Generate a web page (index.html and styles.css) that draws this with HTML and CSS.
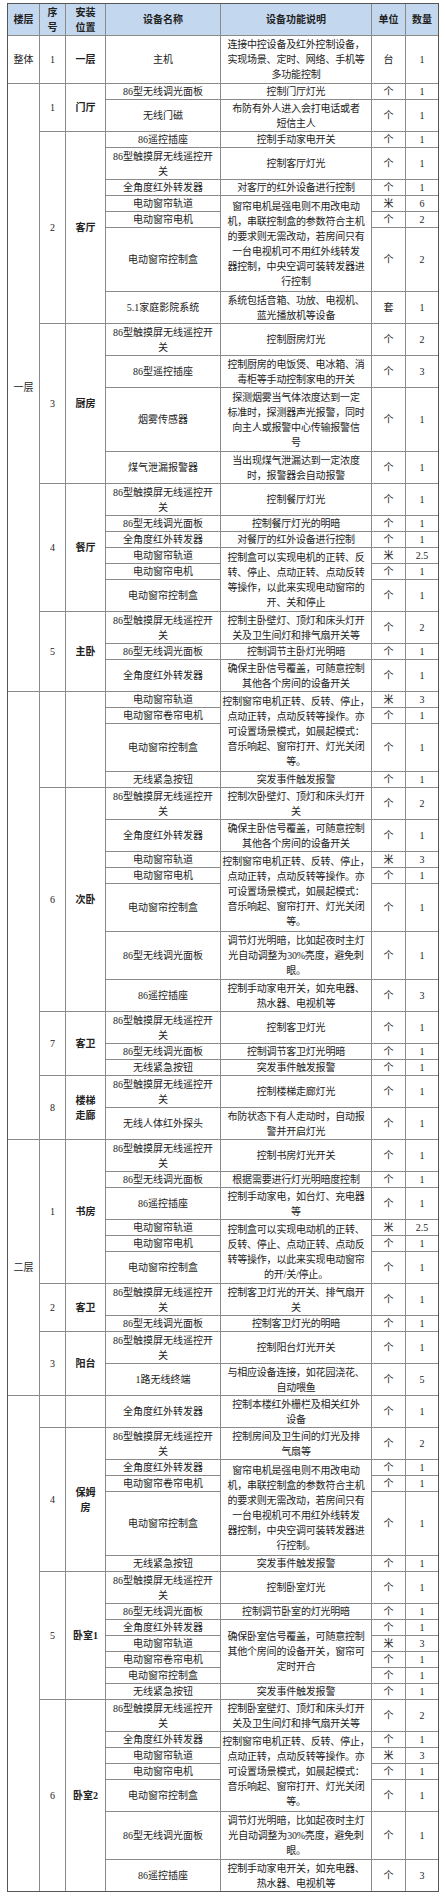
FILE: index.html
```html
<!DOCTYPE html>
<html lang="zh-CN">
<head>
<meta charset="utf-8">
<title>智能家居设备清单</title>
<link rel="stylesheet" href="styles.css">
</head>
<body>
<div class="sheet">
<table class="spec">
<colgroup>
<col class="c-floor"><col class="c-no"><col class="c-pos"><col class="c-name"><col class="c-desc"><col class="c-unit"><col class="c-qty">
</colgroup>
<thead>
<tr class="h2"><th>楼层</th><th>序<br>号</th><th>安装<br>位置</th><th>设备名称</th><th>设备功能说明</th><th>单位</th><th>数量</th></tr>
</thead>
<tbody>
<tr class="h3"><td>整体</td><td>1</td><td class="room">一层</td><td>主机</td><td class="desc">连接中控设备及红外控制设备，<br>实现场景、定时、网络、手机等<br>多功能控制</td><td>台</td><td>1</td></tr>

<tr class="h1"><td rowspan="22">一层</td><td rowspan="2">1</td><td rowspan="2" class="room">门厅</td><td>86型无线调光面板</td><td class="desc">控制门厅灯光</td><td>个</td><td>1</td></tr>
<tr class="h2"><td>无线门磁</td><td class="desc">布防有外人进入会打电话或者<br>短信主人</td><td>个</td><td>1</td></tr>

<tr class="h1"><td rowspan="7">2</td><td rowspan="7" class="room">客厅</td><td>86遥控插座</td><td class="desc">控制手动家电开关</td><td>个</td><td>1</td></tr>
<tr class="h2"><td>86型触摸屏无线遥控开<br>关</td><td class="desc">控制客厅灯光</td><td>个</td><td>1</td></tr>
<tr class="h1"><td>全角度红外转发器</td><td class="desc">对客厅的红外设备进行控制</td><td>个</td><td>1</td></tr>
<tr class="h1"><td>电动窗帘轨道</td><td rowspan="3" class="desc">窗帘电机是强电则不用改电动<br>机，串联控制盒的参数符合主机<br>的要求则无需改动，若房间只有<br>一台电视机可不用红外线转发<br>器控制，中央空调可装转发器进<br>行控制</td><td>米</td><td>6</td></tr>
<tr class="h1"><td>电动窗帘电机</td><td>个</td><td>2</td></tr>
<tr class="h4"><td>电动窗帘控制盒</td><td>个</td><td>2</td></tr>
<tr class="h2"><td>5.1家庭影院系统</td><td class="desc">系统包括音箱、功放、电视机、<br>蓝光播放机等设备</td><td>套</td><td>1</td></tr>

<tr class="h2"><td rowspan="4">3</td><td rowspan="4" class="room">厨房</td><td>86型触摸屏无线遥控开<br>关</td><td class="desc">控制厨房灯光</td><td>个</td><td>2</td></tr>
<tr class="h2"><td>86型遥控插座</td><td class="desc">控制厨房的电饭煲、电冰箱、消<br>毒柜等手动控制家电的开关</td><td>个</td><td>3</td></tr>
<tr class="h4"><td>烟雾传感器</td><td class="desc">探测烟雾当气体浓度达到一定<br>标准时，探测器声光报警，同时<br>向主人或报警中心传输报警信<br>号</td><td>个</td><td>1</td></tr>
<tr class="h2"><td>煤气泄漏报警器</td><td class="desc">当出现煤气泄漏达到一定浓度<br>时，报警器会自动报警</td><td>个</td><td>1</td></tr>

<tr class="h2"><td rowspan="6">4</td><td rowspan="6" class="room">餐厅</td><td>86型触摸屏无线遥控开<br>关</td><td class="desc">控制餐厅灯光</td><td>个</td><td>1</td></tr>
<tr class="h1"><td>86型无线调光面板</td><td class="desc">控制餐厅灯光的明暗</td><td>个</td><td>1</td></tr>
<tr class="h1"><td>全角度红外转发器</td><td class="desc">对餐厅的红外设备进行控制</td><td>个</td><td>1</td></tr>
<tr class="h1"><td>电动窗帘轨道</td><td rowspan="3" class="desc">控制盒可以实现电机的正转、反<br>转、停止、点动正转、点动反转<br>等操作，以此来实现电动窗帘的<br>开、关和停止</td><td>米</td><td>2.5</td></tr>
<tr class="h1"><td>电动窗帘电机</td><td>个</td><td>1</td></tr>
<tr class="h2"><td>电动窗帘控制盒</td><td>个</td><td>1</td></tr>

<tr class="h2"><td rowspan="3">5</td><td rowspan="3" class="room">主卧</td><td>86型触摸屏无线遥控开<br>关</td><td class="desc">控制主卧壁灯、顶灯和床头灯开<br>关及卫生间灯和排气扇开关等</td><td>个</td><td>2</td></tr>
<tr class="h1"><td>86型无线调光面板</td><td class="desc">控制调节主卧灯光明暗</td><td>个</td><td>1</td></tr>
<tr class="h2"><td>全角度红外转发器</td><td class="desc">确保主卧信号覆盖，可随意控制<br>其他各个房间的设备开关</td><td>个</td><td>1</td></tr>

<tr class="h1"><td rowspan="16"></td><td rowspan="4"></td><td rowspan="4" class="room"></td><td>电动窗帘轨道</td><td rowspan="3" class="desc">控制窗帘电机正转、反转、停止，<br>点动正转，点动反转等操作。亦<br>可设置场景模式，如晨起模式：<br>音乐响起、窗帘打开、灯光关闭<br>等。</td><td>米</td><td>3</td></tr>
<tr class="h1"><td>电动窗帘卷帘电机</td><td>个</td><td>1</td></tr>
<tr class="h3"><td>电动窗帘控制盒</td><td>个</td><td>1</td></tr>
<tr class="h1"><td>无线紧急按钮</td><td class="desc">突发事件触发报警</td><td>个</td><td>1</td></tr>

<tr class="h2"><td rowspan="7">6</td><td rowspan="7" class="room">次卧</td><td>86型触摸屏无线遥控开<br>关</td><td class="desc">控制次卧壁灯、顶灯和床头灯开<br>关</td><td>个</td><td>2</td></tr>
<tr class="h2"><td>全角度红外转发器</td><td class="desc">确保主卧信号覆盖，可随意控制<br>其他各个房间的设备开关</td><td>个</td><td>1</td></tr>
<tr class="h1"><td>电动窗帘轨道</td><td rowspan="3" class="desc">控制窗帘电机正转、反转、停止，<br>点动正转，点动反转等操作。亦<br>可设置场景模式，如晨起模式：<br>音乐响起、窗帘打开、灯光关闭<br>等。</td><td>米</td><td>3</td></tr>
<tr class="h1"><td>电动窗帘电机</td><td>个</td><td>1</td></tr>
<tr class="h3"><td>电动窗帘控制盒</td><td>个</td><td>1</td></tr>
<tr class="h3"><td>86型无线调光面板</td><td class="desc">调节灯光明暗，比如起夜时主灯<br>光自动调整为30%亮度，避免刺<br>眼。</td><td>个</td><td>1</td></tr>
<tr class="h2"><td>86遥控插座</td><td class="desc">控制手动家电开关，如充电器、<br>热水器、电视机等</td><td>个</td><td>3</td></tr>

<tr class="h2"><td rowspan="3">7</td><td rowspan="3" class="room">客卫</td><td>86型触摸屏无线遥控开<br>关</td><td class="desc">控制客卫灯光</td><td>个</td><td>1</td></tr>
<tr class="h1"><td>86型无线调光面板</td><td class="desc">控制调节客卫灯光明暗</td><td>个</td><td>1</td></tr>
<tr class="h1"><td>无线紧急按钮</td><td class="desc">突发事件触发报警</td><td>个</td><td>1</td></tr>

<tr class="h2"><td rowspan="2">8</td><td rowspan="2" class="room">楼梯<br>走廊</td><td>86型触摸屏无线遥控开<br>关</td><td class="desc">控制楼梯走廊灯光</td><td>个</td><td>1</td></tr>
<tr class="h2"><td>无线人体红外探头</td><td class="desc">布防状态下有人走动时，自动报<br>警并开启灯光</td><td>个</td><td>1</td></tr>

<tr class="h2"><td rowspan="10">二层</td><td rowspan="6">1</td><td rowspan="6" class="room">书房</td><td>86型触摸屏无线遥控开<br>关</td><td class="desc">控制书房灯光开关</td><td>个</td><td>1</td></tr>
<tr class="h1"><td>86型无线调光面板</td><td class="desc">根据需要进行灯光明暗度控制</td><td>个</td><td>1</td></tr>
<tr class="h2"><td>86遥控插座</td><td class="desc">控制手动家电，如台灯、充电器<br>等</td><td>个</td><td>1</td></tr>
<tr class="h1"><td>电动窗帘轨道</td><td rowspan="3" class="desc">控制盒可以实现电动机的正转、<br>反转、停止、点动正转、点动反<br>转等操作，以此来实现电动窗帘<br>的开/关/停止。</td><td>米</td><td>2.5</td></tr>
<tr class="h1"><td>电动窗帘电机</td><td>个</td><td>1</td></tr>
<tr class="h2"><td>电动窗帘控制盒</td><td>个</td><td>1</td></tr>

<tr class="h2"><td rowspan="2">2</td><td rowspan="2" class="room">客卫</td><td>86型触摸屏无线遥控开<br>关</td><td class="desc">控制客卫灯光的开关、排气扇开<br>关</td><td>个</td><td>1</td></tr>
<tr class="h1"><td>86型无线调光面板</td><td class="desc">控制客卫灯光的明暗</td><td>个</td><td>1</td></tr>

<tr class="h2"><td rowspan="2">3</td><td rowspan="2" class="room">阳台</td><td>86型触摸屏无线遥控开<br>关</td><td class="desc">控制阳台灯光开关</td><td>个</td><td>1</td></tr>
<tr class="h2"><td>1路无线终端</td><td class="desc">与相应设备连接，如花园浇花、<br>自动喂鱼</td><td>个</td><td>5</td></tr>

<tr class="h2"><td rowspan="20"></td><td></td><td class="room"></td><td>全角度红外转发器</td><td class="desc">控制本楼红外栅栏及相关红外<br>设备</td><td>个</td><td>1</td></tr>

<tr class="h2"><td rowspan="5">4</td><td rowspan="5" class="room">保姆<br>房</td><td>86型触摸屏无线遥控开<br>关</td><td class="desc">控制房间及卫生间的灯光及排<br>气扇等</td><td>个</td><td>2</td></tr>
<tr class="h1"><td>全角度红外转发器</td><td rowspan="3" class="desc">窗帘电机是强电则不用改电动<br>机，串联控制盒的参数符合主机<br>的要求则无需改动，若房间只有<br>一台电视机可不用红外线转发<br>器控制，中央空调可装转发器进<br>行控制。</td><td>个</td><td>1</td></tr>
<tr class="h1"><td>电动窗帘卷帘电机</td><td>个</td><td>1</td></tr>
<tr class="h4"><td>电动窗帘控制盒</td><td>个</td><td>1</td></tr>
<tr class="h1"><td>无线紧急按钮</td><td class="desc">突发事件触发报警</td><td>个</td><td>1</td></tr>

<tr class="h2"><td rowspan="7">5</td><td rowspan="7" class="room">卧室1</td><td>86型触摸屏无线遥控开<br>关</td><td class="desc">控制卧室灯光</td><td>个</td><td>1</td></tr>
<tr class="h1"><td>86型无线调光面板</td><td class="desc">控制调节卧室的灯光明暗</td><td>个</td><td>1</td></tr>
<tr class="h1"><td>全角度红外转发器</td><td rowspan="4" class="desc">确保卧室信号覆盖，可随意控制<br>其他个房间的设备开关，窗帘可<br>定时开合</td><td>个</td><td>1</td></tr>
<tr class="h1"><td>电动窗帘轨道</td><td>米</td><td>3</td></tr>
<tr class="h1"><td>电动窗帘卷帘电机</td><td>个</td><td>1</td></tr>
<tr class="h1"><td>电动窗帘控制盒</td><td>个</td><td>1</td></tr>
<tr class="h1"><td>无线紧急按钮</td><td class="desc">突发事件触发报警</td><td>个</td><td>1</td></tr>

<tr class="h2"><td rowspan="7">6</td><td rowspan="7" class="room">卧室2</td><td>86型触摸屏无线遥控开<br>关</td><td class="desc">控制卧室壁灯、顶灯和床头灯开<br>关及卫生间灯和排气扇开关等</td><td>个</td><td>2</td></tr>
<tr class="h1"><td>全角度红外转发器</td><td rowspan="4" class="desc">控制窗帘电机正转、反转、停止，<br>点动正转，点动反转等操作。亦<br>可设置场景模式，如晨起模式：<br>音乐响起、窗帘打开、灯光关闭<br>等。</td><td>个</td><td>1</td></tr>
<tr class="h1"><td>电动窗帘轨道</td><td>米</td><td>3</td></tr>
<tr class="h1"><td>电动窗帘电机</td><td>个</td><td>1</td></tr>
<tr class="h2"><td>电动窗帘控制盒</td><td>个</td><td>1</td></tr>
<tr class="h3"><td>86型无线调光面板</td><td class="desc">调节灯光明暗，比如起夜时主灯<br>光自动调整为30%亮度，避免刺<br>眼。</td><td>个</td><td>1</td></tr>
<tr class="h2"><td>86遥控插座</td><td class="desc">控制手动家电开关，如充电器、<br>热水器、电视机等</td><td>个</td><td>3</td></tr>
</tbody>
</table>
</div>
</body>
</html>
```

FILE: styles.css
```css
body {
  margin: 0;
  background: #ffffff;
}

.sheet {
  padding: 3px 0 0 7px;
}

.spec {
  border-collapse: collapse;
  table-layout: fixed;
  width: 431px;
  font-family: "Liberation Serif", "Noto Sans CJK SC", serif;
  font-size: 10px;
  line-height: 15px;
  color: #222222;
  outline: 1px solid #555555;
  outline-offset: -1px;
}

.c-floor { width: 32px; }
.c-no { width: 26px; }
.c-pos { width: 40px; }
.c-name { width: 115px; }
.c-desc { width: 151px; }
.c-unit { width: 34px; }
.c-qty { width: 33px; }

.spec th,
.spec td {
  border: 1px solid #8a8a8a;
  padding: 0;
  text-align: center;
  vertical-align: middle;
  white-space: nowrap;
}

.spec th {
  background: #c3d8ef;
  font-weight: bold;
}

.spec .room {
  font-weight: bold;
}

.spec .desc {
  letter-spacing: -0.2px;
}

.h1 { height: 16px; }
.h2 { height: 32px; }
.h3 { height: 48px; }
.h4 { height: 64px; }
```
